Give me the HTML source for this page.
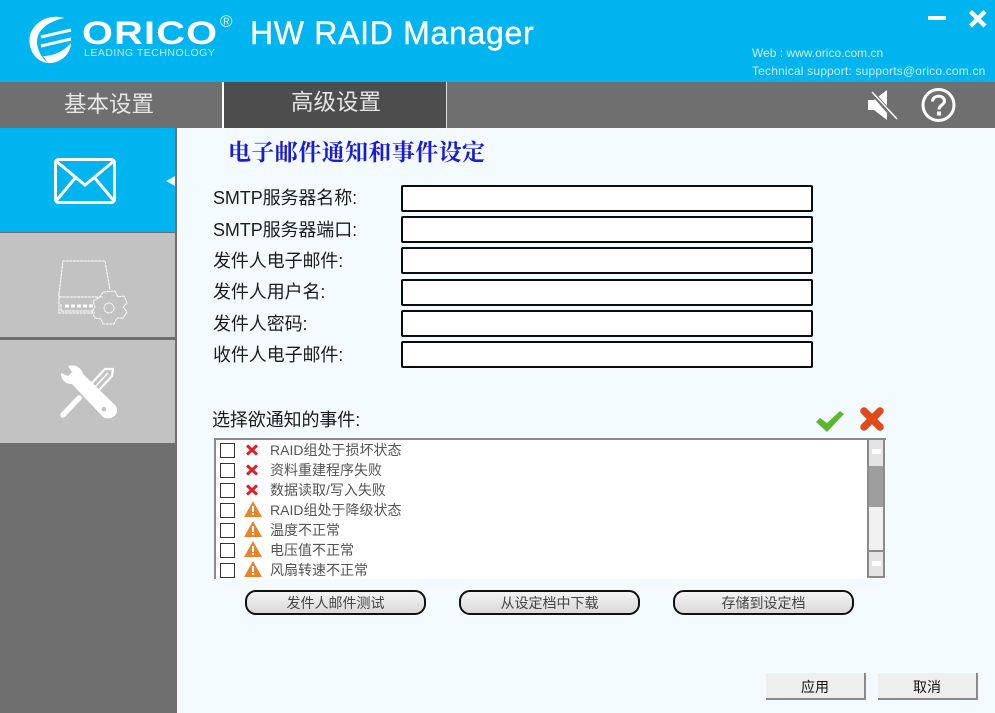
<!DOCTYPE html>
<html><head><meta charset="utf-8">
<style>
html,body{margin:0;padding:0}
body{width:995px;height:713px;position:relative;overflow:hidden;background:#f3fbff;font-family:"Liberation Sans","Noto Sans CJK SC",sans-serif;}
.a{position:absolute}
.t{position:absolute;white-space:nowrap;line-height:1}
.lbl{font-size:18px;letter-spacing:-.1px;color:#1c1c1c;left:213px}
.inp{position:absolute;left:401px;width:408px;height:23px;border:2px solid #0c0c0c;border-radius:2px;background:#fff}
.cb{position:absolute;left:220px;width:13px;height:13px;border:1.5px solid #333;background:#fff}
.it{position:absolute;left:270px;font-size:14px;color:#555;line-height:1;white-space:nowrap}
.rb{position:absolute;top:590px;width:177px;height:21px;border:2px solid #111;border-radius:11px;background:linear-gradient(#f4f4f4,#d9d9d9);font-size:14px;color:#444;text-align:center;line-height:22px}
.bb{position:absolute;top:673px;width:98px;height:25px;background:#efefef;border-right:2px solid #8a8a8a;border-bottom:2px solid #8a8a8a;font-size:14px;color:#111;text-align:center;line-height:28px}
</style></head><body>
<div class="a" style="left:0;top:0;width:995px;height:82px;background:#00b4ef"></div>
<svg class="a" style="left:29px;top:16px" width="44" height="48" viewBox="0 0 44 48" fill="none">
<path d="M35 2C22 -2 6 4 1 19C-2 33 7 46 19 47C10 40 6 28 9 20C12 11 22 5 35 2Z" fill="#fff"/>
<path d="M12 21L42 14M12 30L42 23" stroke="#fff" stroke-width="3"/>
<path d="M42 27C42 38 31 48 19 47L14 40C25 40 35 35 42 27Z" fill="#fff"/>
</svg>
<div class="t" style="left:82px;top:17px;font-size:32px;font-weight:bold;color:#fff;letter-spacing:1px;transform:scaleX(1.24);transform-origin:0 0">ORICO</div>
<div class="t" style="left:84px;top:48px;font-size:10.5px;color:#bfeafa;letter-spacing:.5px">LEADING TECHNOLOGY</div>
<div class="t" style="left:220px;top:13px;font-size:17px;color:#dff5fd">®</div>
<div class="t" style="left:250px;top:17px;font-size:32px;color:#fff;letter-spacing:.7px;-webkit-text-stroke:.4px #fff">HW RAID Manager</div>
<div class="t" style="left:752px;top:47px;font-size:12px;color:#c9eefb">Web : www.orico.com.cn</div>
<div class="t" style="left:752px;top:65px;font-size:12px;letter-spacing:.18px;color:#c9eefb">Technical support: supports@orico.com.cn</div>
<div class="a" style="left:928px;top:16px;width:18px;height:4px;background:#fff"></div>
<svg class="a" style="left:968px;top:9px" width="20" height="20" viewBox="0 0 20 20"><path d="M2.5 2.5L17 17M17 2.5L2.5 17" stroke="#fff" stroke-width="4.4"/></svg>

<div class="a" style="left:0;top:82px;width:995px;height:46px;background:#6f6f6f"></div>
<div class="a" style="left:222px;top:82px;width:225px;height:46px;background:#4d4d4d;border-left:2px solid #fff;border-right:1px solid #ddd;box-sizing:border-box"></div>
<div class="t" style="left:64px;top:94px;font-size:22.500px;color:#e6e6e6">基本设置</div>
<div class="t" style="left:291px;top:92px;font-size:22.500px;color:#e6e6e6">高级设置</div>
<svg class="a" style="left:866px;top:86px" width="34" height="38" viewBox="0 0 34 38">
<path d="M2 14H8L21 4V34L8 24H2Z" fill="#fff"/><path d="M4 4L31 35" stroke="#6f6f6f" stroke-width="4.500"/><path d="M6 6L31 33" stroke="#fff" stroke-width="1.500"/></svg>
<svg class="a" style="left:921px;top:87px" width="36" height="36" viewBox="0 0 36 36">
<circle cx="17.500" cy="18" r="15.500" fill="none" stroke="#fff" stroke-width="3"/>
<path d="M11.500 14.500C11.500 7.500 23.500 7.500 23.500 14C23.500 18 18 18 18 22.500" fill="none" stroke="#fff" stroke-width="3"/><rect x="16" y="24.500" width="4" height="4" fill="#fff"/></svg>

<div class="a" style="left:0;top:128px;width:177px;height:585px;background:#6f6f6f"></div>
<div class="a" style="left:0;top:128px;width:175px;height:104px;background:#00b4ef"></div>
<div class="a" style="left:0;top:233px;width:175px;height:104px;background:#c2c2c2"></div>
<div class="a" style="left:0;top:340px;width:175px;height:103px;background:#c2c2c2"></div>
<div class="a" style="left:166px;top:176px;width:0;height:0;border-top:5px solid transparent;border-bottom:5px solid transparent;border-right:9px solid #e6f7fd"></div>
<svg class="a" style="left:53px;top:157px" width="64" height="48" viewBox="0 0 64 48" fill="none" stroke="#fff" stroke-width="3">
<rect x="2.500" y="2.500" width="59" height="43" rx="3"/><path d="M3 4L32 28L61 4M3 44L23 20M61 44L41 20"/></svg>
<svg class="a" style="left:57px;top:258px" width="72" height="68" viewBox="0 0 72 68" fill="none" stroke="#fff" stroke-width="1" stroke-dasharray="3 .6">
<path d="M2 36L6 3H48L53 32"/><path d="M2 36V55H38M2 39H46M4 46V53H36"/>
<path d="M8 48h4M14 48h4M20 48h4M26 48h4M32 48h4" stroke-width="3" stroke-dasharray="none"/>
<path d="M58 33L61 39L67 38L70 45L66 49L70 54L66 60L60 60L57 66H46L44 61L38 60L35 54L38 49L36 43L43 39L46 34Z"/><circle cx="52" cy="50" r="5"/></svg>
<svg class="a" style="left:55px;top:360px" width="65" height="65" viewBox="0 0 65 65" fill="none">
<path d="M13 6L17 12L13 16L6 13C6 20 10 24 17 24L48 57C53 60 62 58 62 50C62 48 61 46 60 45L28 14C26 7 20 4 13 6Z" fill="#fff"/>
<path d="M8 55L24 38" stroke="#fff" stroke-width="5.500" stroke-linecap="round"/>
<path d="M36 24L50 9L58 9L57 16L43 31Z" stroke="#fff" stroke-width="2.200"/><path d="M40 27L53 13" stroke="#fff" stroke-width="1.500"/>
<circle cx="49" cy="49" r="2.300" fill="#c2c2c2"/></svg>

<div class="t" style="left:228px;top:141px;font-size:23px;font-weight:bold;color:#1b1bd6;letter-spacing:.4px;font-family:'Liberation Serif','Noto Serif CJK SC',serif">电子邮件通知和事件设定</div>

<div class="t lbl" style="top:189px">SMTP服务器名称:</div>
<div class="t lbl" style="top:221px">SMTP服务器端口:</div>
<div class="t lbl" style="top:252px">发件人电子邮件:</div>
<div class="t lbl" style="top:283px">发件人用户名:</div>
<div class="t lbl" style="top:315px">发件人密码:</div>
<div class="t lbl" style="top:346px">收件人电子邮件:</div>
<div class="inp" style="top:185px"></div>
<div class="inp" style="top:216px"></div>
<div class="inp" style="top:247px"></div>
<div class="inp" style="top:279px"></div>
<div class="inp" style="top:310px"></div>
<div class="inp" style="top:341px"></div>

<div class="t lbl" style="left:212px;top:411px">选择欲通知的事件:</div>
<svg class="a" style="left:815px;top:409px" width="30" height="24" viewBox="0 0 30 24"><path d="M1 13L5 9L12 14L25 2L29 5L12 23Z" fill="#5cb82a"/></svg>
<svg class="a" style="left:859px;top:406px" width="26" height="26" viewBox="0 0 26 26"><path d="M5 5L21 21M21 5L5 21" stroke="#e24a1c" stroke-width="7.500" stroke-linecap="round"/></svg>

<div class="a" style="left:214px;top:438px;width:672px;height:141px;background:#fff;box-sizing:border-box;border-top:2px solid #8a8a8a;border-left:2px solid #8a8a8a;overflow:hidden">
<div class="a" style="left:651px;top:0;width:18px;height:138px;background:#e4e4e4;border:2px solid #8a8a8a;border-top:0;box-sizing:border-box">
<div class="a" style="left:0;top:26px;width:14px;height:41px;background:#9e9e9e"></div>
<div class="a" style="left:0;top:67px;width:14px;height:43px;background:#f1f1f1"></div>
<div class="a" style="left:0;top:110px;width:14px;height:2px;background:#8a8a8a"></div>
<div class="a" style="left:3px;top:9px;width:9px;height:5px;background:#fff"></div>
<div class="a" style="left:3px;top:121px;width:9px;height:5px;background:#fff"></div>
</div>
</div>
<div class="cb" style="top:443px"></div>
<div class="cb" style="top:463px"></div>
<div class="cb" style="top:483px"></div>
<div class="cb" style="top:503px"></div>
<div class="cb" style="top:523px"></div>
<div class="cb" style="top:543px"></div>
<div class="cb" style="top:563px"></div>
<svg class="a" style="left:245px;top:444px" width="14" height="12" viewBox="0 0 14 12"><path d="M2 1.500L12 10.500M12 1.500L2 10.500" stroke="#d8232f" stroke-width="3"/></svg>
<svg class="a" style="left:245px;top:464px" width="14" height="12" viewBox="0 0 14 12"><path d="M2 1.500L12 10.500M12 1.500L2 10.500" stroke="#d8232f" stroke-width="3"/></svg>
<svg class="a" style="left:245px;top:484px" width="14" height="12" viewBox="0 0 14 12"><path d="M2 1.500L12 10.500M12 1.500L2 10.500" stroke="#d8232f" stroke-width="3"/></svg>
<svg class="a" style="left:244px;top:501px" width="18" height="16" viewBox="0 0 18 16"><path d="M9 0L18 16H0Z" fill="#e8842c"/><rect x="8" y="5" width="2" height="6" fill="#fff"/><rect x="8" y="12" width="2" height="2" fill="#fff"/></svg>
<svg class="a" style="left:244px;top:521px" width="18" height="16" viewBox="0 0 18 16"><path d="M9 0L18 16H0Z" fill="#e8842c"/><rect x="8" y="5" width="2" height="6" fill="#fff"/><rect x="8" y="12" width="2" height="2" fill="#fff"/></svg>
<svg class="a" style="left:244px;top:541px" width="18" height="16" viewBox="0 0 18 16"><path d="M9 0L18 16H0Z" fill="#e8842c"/><rect x="8" y="5" width="2" height="6" fill="#fff"/><rect x="8" y="12" width="2" height="2" fill="#fff"/></svg>
<svg class="a" style="left:244px;top:561px" width="18" height="16" viewBox="0 0 18 16"><path d="M9 0L18 16H0Z" fill="#e8842c"/><rect x="8" y="5" width="2" height="6" fill="#fff"/><rect x="8" y="12" width="2" height="2" fill="#fff"/></svg>
<div class="it" style="top:443px">RAID组处于损坏状态</div>
<div class="it" style="top:463px">资料重建程序失败</div>
<div class="it" style="top:483px">数据读取/写入失败</div>
<div class="it" style="top:503px">RAID组处于降级状态</div>
<div class="it" style="top:523px">温度不正常</div>
<div class="it" style="top:543px">电压值不正常</div>
<div class="it" style="top:563px">风扇转速不正常</div>

<div class="rb" style="left:245px">发件人邮件测试</div>
<div class="rb" style="left:459px">从设定档中下载</div>
<div class="rb" style="left:673px">存储到设定档</div>
<div class="bb" style="left:766px">应用</div>
<div class="bb" style="left:878px">取消</div>
</body></html>
